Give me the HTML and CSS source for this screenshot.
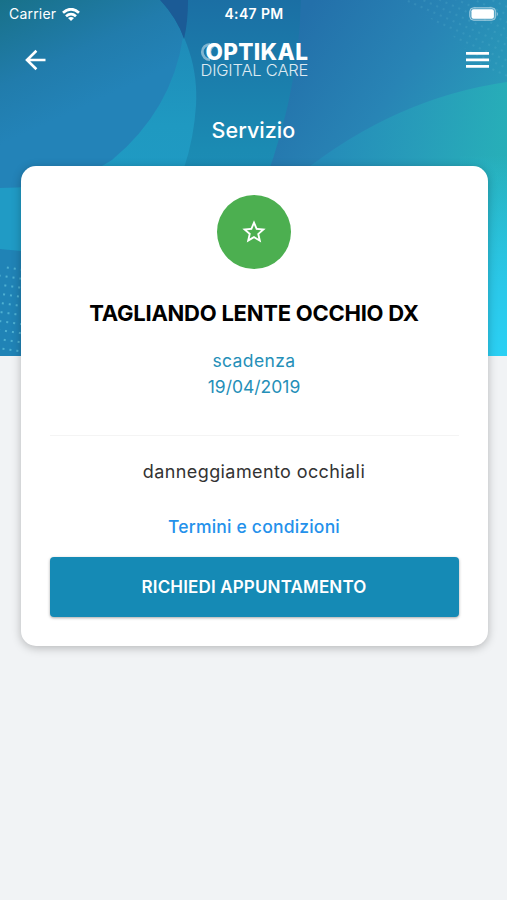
FILE: index.html
```html
<!DOCTYPE html>
<html lang="it">
<head>
<meta charset="utf-8">
<title>Servizio</title>
<link rel="stylesheet" href="styles.css">
</head>
<body>
<svg class="hero" viewBox="0 0 507 356" preserveAspectRatio="none" aria-hidden="true">
  <defs>
    <linearGradient id="base" x1="0" y1="0" x2="0" y2="1"><stop offset="0" stop-color="#1b6fa4"/><stop offset=".42" stop-color="#1b8bb3"/><stop offset="1" stop-color="#2596ca"/></linearGradient>
    <linearGradient id="disc" gradientUnits="userSpaceOnUse" x1="0" y1="0" x2="55" y2="120"><stop offset="0" stop-color="#187189"/><stop offset=".6" stop-color="#217cac"/><stop offset="1" stop-color="#2383b8"/></linearGradient>
    <linearGradient id="right" gradientUnits="userSpaceOnUse" x1="300" y1="20" x2="490" y2="150"><stop offset="0" stop-color="#2370aa"/><stop offset=".5" stop-color="#2884b5"/><stop offset="1" stop-color="#29a0ba"/></linearGradient>
    <linearGradient id="wave" gradientUnits="userSpaceOnUse" x1="320" y1="130" x2="500" y2="150"><stop offset="0" stop-color="#248dba"/><stop offset=".55" stop-color="#279fba"/><stop offset="1" stop-color="#27b0b8"/></linearGradient>
    <linearGradient id="cyan" x1="0" y1="0" x2="0" y2="1"><stop offset="0" stop-color="#2bd0f4" stop-opacity="0"/><stop offset=".65" stop-color="#2bc8e9"/><stop offset="1" stop-color="#2bd0f4"/></linearGradient>
    <linearGradient id="crescent" x1="0" y1="0" x2="0" y2="1"><stop offset="0" stop-color="#1e86b5"/><stop offset=".5" stop-color="#1f99c1"/><stop offset="1" stop-color="#209cc6"/></linearGradient>
    <pattern id="dots" width="7" height="9" patternUnits="userSpaceOnUse" patternTransform="rotate(8)"><circle cx="3" cy="3" r=".9" fill="#63c5df"/></pattern>
    <pattern id="fine" width="7" height="7" patternUnits="userSpaceOnUse" patternTransform="rotate(24)"><circle cx="3" cy="3" r=".65" fill="#62b8cf"/></pattern>
  </defs>
  <rect width="507" height="356" fill="url(#base)"/>
  <path d="M301 0H507V356H240V240Q298 120 301 0Z" fill="url(#right)"/>
  <path d="M300 174Q395 98 507 82V356H240Z" fill="url(#wave)" opacity=".85"/>
  <rect x="460" y="155" width="47" height="201" fill="url(#cyan)"/>
  <path d="M0 0H160C188 32 198 70 196 105Q194 138 184 168L150 250H0Z" fill="url(#crescent)"/>
  <path d="M0 0H160Q176 18 183 37Q172 110 112 160Q70 188 0 188Z" fill="url(#disc)"/>
  <path d="M160 0H188Q188 22 184 39Q177 18 160 0Z" fill="#1b5b96"/>
  <path d="M0 188H30V252L0 249Z" fill="#209bc5"/>
  <path d="M0 249L30 252V356H0Z" fill="#2083b6"/>
  <path d="M8 262H22V356H0V272Z" fill="url(#dots)"/>
  <path d="M400 0H507V78Q482 71 462 45Q441 22 400 0Z" fill="url(#fine)" opacity=".6"/>
</svg>
<div class="screen">
  <header class="status">
    <div class="carrier"><span>Carrier</span>
      <svg width="18" height="13" viewBox="0 0 18 13" fill="none" stroke="#fff" stroke-width="2.8"><path d="M1 4.7Q9-2.2 17 4.7"/><path d="M4 8.2Q9 4 14 8.2"/><path d="M9 13L6 10Q9 7.8 12 10Z" fill="#fff" stroke="none"/></svg>
    </div>
    <span class="time">4:47 PM</span>
    <svg class="battery" width="30" height="14" viewBox="0 0 30 14"><rect x=".7" y=".7" width="26" height="12.6" rx="4" fill="#fff" fill-opacity=".2" stroke="#fff" stroke-opacity=".5"/><rect x="2.5" y="2.3" width="22.4" height="9.4" rx="2" fill="#fff"/><path d="M27.8 4.7Q30 7 27.8 9.3Z" fill="#fff" opacity=".5"/></svg>
  </header>
  <nav class="nav">
    <svg width="22" height="22" viewBox="0 0 22 22" fill="none" stroke="#fff" stroke-width="2.6"><path d="M11.4 1.8L2 11L11.4 20.2M2 11H20.5"/></svg>
    <div class="brand">
      <div class="brand-top"><svg width="15" height="20" viewBox="0 0 15 20" fill="none" stroke="#fff" stroke-opacity=".45"><path d="M10 2.3A7.7 7.7 0 1 0 10 17.7" stroke-width="2.8"/><path d="M14 3.4Q6.5 10 14 16.6" stroke-width="2"/></svg><span>OPTIKAL</span></div>
      <div class="brand-sub">DIGITAL CARE</div>
    </div>
    <svg width="23" height="16" viewBox="0 0 23 16" fill="#fff"><path d="M0 0H23V2.7H0ZM0 6.5H23V9.2H0ZM0 13H23V15.7H0Z"/></svg>
  </nav>
  <h1>Servizio</h1>
  <main class="card">
    <div class="badge"><svg width="28" height="28" viewBox="0 0 24 24" fill="#fff"><path d="M22 9.24l-7.19-.62L12 2 9.19 8.63 2 9.24l5.46 4.73L5.82 21 12 17.27 18.18 21l-1.63-7.03L22 9.24zM12 15.4l-3.76 2.27 1-4.28-3.32-2.88 4.38-.38L12 6.1l1.71 4.04 4.38.38-3.32 2.88 1 4.28L12 15.4z"/></svg></div>
    <h2>TAGLIANDO LENTE OCCHIO DX</h2>
    <p class="due"><span class="due-label">scadenza</span><br><span class="due-date">19/04/2019</span></p>
    <hr>
    <p class="desc">danneggiamento occhiali</p>
    <a class="terms">Termini e condizioni</a>
    <button>RICHIEDI APPUNTAMENTO</button>
  </main>
</div>
</body>
</html>
```
FILE: styles.css
```css
* { box-sizing: border-box; }
body { margin: 0; height: 900px; position: relative; background: #f1f3f5; font-family: Inter, "Open Sans", sans-serif; overflow: hidden; }
.hero { position: absolute; top: 0; left: 0; width: 507px; height: 356px; }
.screen { position: relative; display: flex; flex-direction: column; }
.status { height: 28px; padding: 0 8px 0 9px; display: grid; grid-template-columns: 1fr auto 1fr; align-items: center; color: #fff; font-size: 14px; line-height: 28px; }
.carrier { display: flex; align-items: center; gap: 6px; letter-spacing: .2px; }
.time { font-weight: 600; letter-spacing: .35px; }
.battery { justify-self: end; }
.nav { height: 64px; padding: 0 18px 0 25px; display: flex; align-items: center; justify-content: space-between; }
.brand { width: 110px; margin-left: -4px; padding-top: 2px; color: #fff; }
.brand-top { display: flex; align-items: center; height: 19px; }
.brand-top svg { flex: none; }
.brand-top span { margin-left: -9px; font: 800 22.5px/19px Inter, sans-serif; letter-spacing: .35px; }
.brand-sub { padding-left: 1px; font-size: 16.5px; font-weight: 300; line-height: 19px; letter-spacing: -.2px; white-space: nowrap; opacity: .85; }
h1 { margin: 22px 0 0; color: #fff; text-align: center; font-size: 21.5px; font-weight: 500; line-height: 32px; letter-spacing: .05px; }
.card { margin: 20px 19.5px 0 20.5px; height: 479.5px; padding: 29px 29px 0; border-radius: 15px; background: #fff; box-shadow: 0 2px 10px rgba(0, 0, 0, .25); display: flex; flex-direction: column; align-items: center; text-align: center; }
.badge { width: 74px; height: 74px; border-radius: 50%; background: #4caf50; display: grid; place-items: center; }
h2 { margin: 28px 0 0; color: #000; font-size: 22px; line-height: 32px; font-weight: 700; white-space: nowrap; letter-spacing: -.25px; }
.due { margin: 19px 0 0; color: #258fb8; font-size: 17.5px; line-height: 26px; }
.due-label { letter-spacing: .4px; }
hr { width: 100%; height: 1px; border: 0; margin: 35px 0 0; background: #f4f4f4; }
.desc { margin: 23px 0 0; color: #333; font-size: 18px; line-height: 26px; letter-spacing: .4px; }
.terms { margin-top: 29px; color: #2491eb; font-size: 17.5px; font-weight: 500; line-height: 26px; letter-spacing: .2px; }
button { width: 100%; height: 60px; margin-top: 17px; border: 0; border-radius: 4px; background: #158ab5; color: #fff; font: 600 17px Inter, sans-serif; letter-spacing: .15px; box-shadow: 0 1px 3px rgba(0, 0, 0, .35); }
```
